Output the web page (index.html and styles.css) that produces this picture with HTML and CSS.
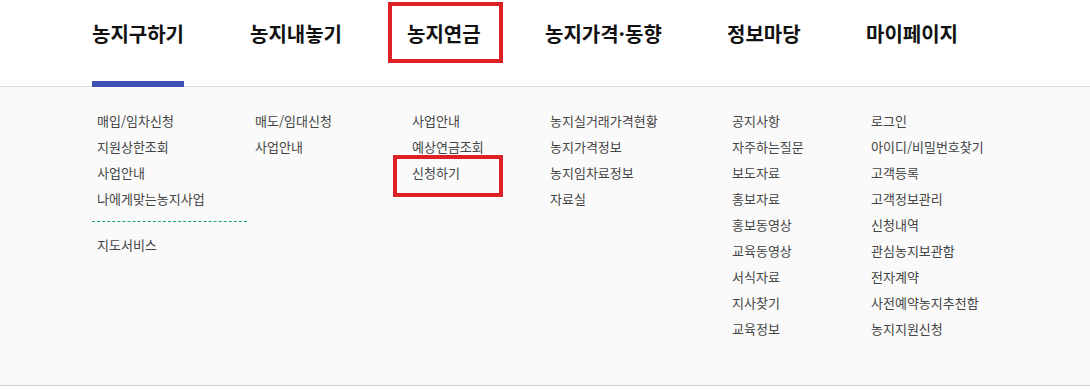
FILE: index.html
```html
<!DOCTYPE html>
<html lang="ko">
<head>
<meta charset="utf-8">
<title>농지은행 메뉴</title>
<link rel="stylesheet" href="styles.css">
</head>
<body>
<header class="gnb">
  <ul class="gnb-list cols">
    <li class="gnb-item"><a href="#" class="active">농지구하기</a></li>
    <li class="gnb-item"><a href="#">농지내놓기</a></li>
    <li class="gnb-item"><a href="#">농지연금<span class="annot annot-top"></span></a></li>
    <li class="gnb-item"><a href="#">농지가격·동향</a></li>
    <li class="gnb-item"><a href="#">정보마당</a></li>
    <li class="gnb-item"><a href="#">마이페이지</a></li>
  </ul>
</header>
<section class="panel">
  <div class="cols">
    <ul class="sub">
      <li>매입/임차신청</li>
      <li>지원상한조회</li>
      <li>사업안내</li>
      <li>나에게맞는농지사업</li>
      <li class="divider"></li>
      <li>지도서비스</li>
    </ul>
    <ul class="sub">
      <li>매도/임대신청</li>
      <li>사업안내</li>
    </ul>
    <ul class="sub">
      <li>사업안내</li>
      <li>예상연금조회</li>
      <li class="marked">신청하기<span class="annot annot-sub"></span></li>
    </ul>
    <ul class="sub">
      <li>농지실거래가격현황</li>
      <li>농지가격정보</li>
      <li>농지임차료정보</li>
      <li>자료실</li>
    </ul>
    <ul class="sub">
      <li>공지사항</li>
      <li>자주하는질문</li>
      <li>보도자료</li>
      <li>홍보자료</li>
      <li>홍보동영상</li>
      <li>교육동영상</li>
      <li>서식자료</li>
      <li>지사찾기</li>
      <li>교육정보</li>
    </ul>
    <ul class="sub">
      <li>로그인</li>
      <li>아이디/비밀번호찾기</li>
      <li>고객등록</li>
      <li>고객정보관리</li>
      <li>신청내역</li>
      <li>관심농지보관함</li>
      <li>전자계약</li>
      <li>사전예약농지추천함</li>
      <li>농지지원신청</li>
    </ul>
  </div>
</section>
</body>
</html>
```

FILE: styles.css
```css
* { box-sizing: border-box; }
html, body { margin: 0; padding: 0; background: #fff; }
body {
  font-family: "Noto Sans CJK KR", "Noto Sans", sans-serif;
  width: 1090px;
}
ul { list-style: none; margin: 0; padding: 0; }
a { text-decoration: none; color: inherit; }

.cols {
  display: grid;
  grid-template-columns: 158px 157px 138px 182px 139px 1fr;
  padding-left: 92px;
}

.gnb {
  height: 87px;
  background: #fff;
  border-bottom: 1px solid #dcdcdc;
}
.gnb-list { height: 86px; }
.gnb-item a {
  position: relative;
  display: inline-block;
  height: 86px;
  line-height: 67px;
  font-size: 20px;
  font-weight: 700;
  color: #111;
  white-space: nowrap;
}
.gnb-item a.active::after {
  content: "";
  position: absolute;
  left: 0;
  right: 0;
  bottom: -1px;
  height: 6px;
  background: #4051b5;
}

.annot {
  position: absolute;
  border: 4px solid #dd2025;
  pointer-events: none;
}
.annot-top { left: -19px; top: 2px; width: 115px; height: 61px; }
.annot-sub { left: -19px; top: -5px; width: 110px; height: 42px; }

.panel {
  height: 299px;
  padding-top: 21px;
  background: #fafafa;
  border-bottom: 1px solid #cfcfcf;
}
.sub { padding-left: 5px; }
.sub li {
  position: relative;
  font-size: 13px;
  line-height: 26px;
  height: 26px;
  color: #444;
  white-space: nowrap;
}
.sub li.divider {
  height: 0;
  margin: 9px 0 10px -5px;
  width: 155px;
  border-top: 1px dashed #16a085;
}
```
